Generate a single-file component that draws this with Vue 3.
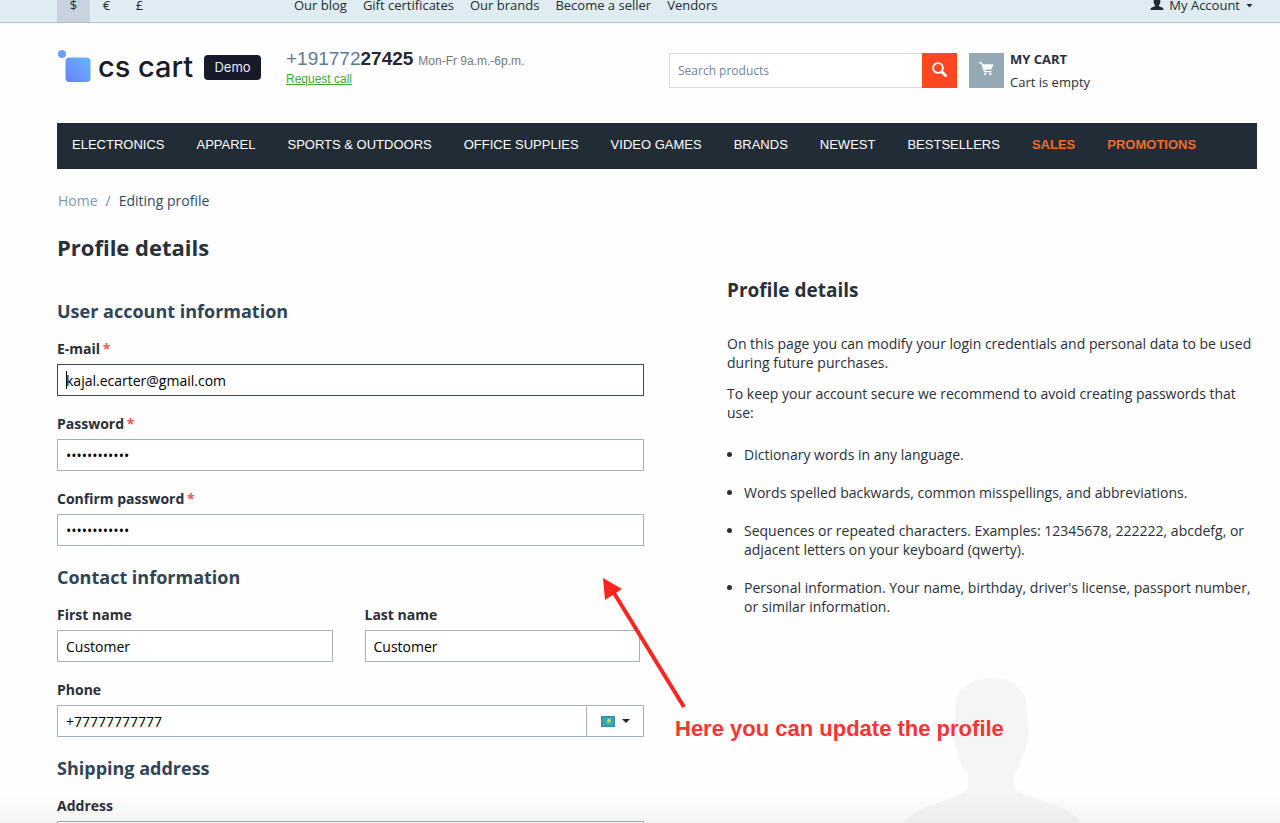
<script setup>
import { ref } from 'vue'

const currencies = [
  { sign: '$', active: true },
  { sign: '€', active: false },
  { sign: '£', active: false },
]
const quickLinks = ['Our blog', 'Gift certificates', 'Our brands', 'Become a seller', 'Vendors']
const menu = [
  { name: 'ELECTRONICS' },
  { name: 'APPAREL' },
  { name: 'SPORTS & OUTDOORS' },
  { name: 'OFFICE SUPPLIES' },
  { name: 'VIDEO GAMES' },
  { name: 'BRANDS' },
  { name: 'NEWEST' },
  { name: 'BESTSELLERS' },
  { name: 'SALES', hot: true },
  { name: 'PROMOTIONS', hot: true },
]
const tips = [
  'Dictionary words in any language.',
  'Words spelled backwards, common misspellings, and abbreviations.',
  'Sequences or repeated characters. Examples: 12345678, 222222, abcdefg, or adjacent letters on your keyboard (qwerty).',
  "Personal information. Your name, birthday, driver's license, passport number, or similar information.",
]
const search = ref('')
const email = ref('kajal.ecarter@gmail.com')
const password = ref('secret123456')
const confirmation = ref('secret123456')
const firstName = ref('Customer')
const lastName = ref('Customer')
const phone = ref('+77777777777')
const address = ref('')
</script>

<template>
  <div class="page">
    <div class="topbar">
      <div class="currencies">
        <button v-for="c in currencies" :key="c.sign" type="button" class="currency" :class="{ active: c.active }">{{ c.sign }}</button>
      </div>
      <nav class="quick-links">
        <a v-for="l in quickLinks" :key="l" href="#">{{ l }}</a>
      </nav>
      <button type="button" class="account">
        <svg class="user-icon" viewBox="0 0 14 14" aria-hidden="true">
          <path d="M7 0C4.600 0 3.500 1.600 3.600 3.600C3.700 5.300 4.300 6.800 5.300 7.500C5.200 8.300 4.500 8.500 3 9C1 9.700 .5 10.400 .5 12H13.500C13.500 10.400 13 9.700 11 9C9.500 8.500 8.800 8.300 8.700 7.500C9.700 6.800 10.300 5.300 10.400 3.600C10.500 1.600 9.400 0 7 0Z" fill="#222c33" />
        </svg>
        <span>My Account</span>
        <svg class="caret" viewBox="0 0 7 4" aria-hidden="true"><path d="M.5 0H6.500L3.500 3.500Z" fill="#222c33" /></svg>
      </button>
    </div>

    <div class="container">
      <header class="header">
        <a href="#" class="logo" aria-label="CS-Cart Demo">
          <svg class="logo-mark" viewBox="0 0 33 33" aria-hidden="true">
            <defs>
              <linearGradient id="markFill" x1="0" y1="1" x2="1" y2="0">
                <stop offset="0" stop-color="#6c80fb" />
                <stop offset="1" stop-color="#65b7ff" />
              </linearGradient>
            </defs>
            <circle cx="4" cy="4" r="4" fill="#6d9df6" />
            <rect x="7.500" y="7.500" width="25" height="24.500" rx="4" fill="url(#markFill)" />
          </svg>
          <span class="logo-name">cs cart</span>
          <span class="badge">Demo</span>
        </a>
        <div class="phone-block">
          <div class="phone-line">
            <a href="#" class="phone-number">+191772<b>27425</b></a>
            <span class="hours">Mon-Fr 9a.m.-6p.m.</span>
          </div>
          <a href="#" class="request">Request call</a>
        </div>
        <form class="search" @submit.prevent>
          <input v-model="search" type="text" placeholder="Search products" aria-label="Search products" />
          <button type="submit" aria-label="Search">
            <svg viewBox="0 0 16 16" aria-hidden="true">
              <circle cx="6" cy="6" r="4.900" fill="none" stroke="#fff" stroke-width="1.900" />
              <path d="M9.800 9.800L13.500 13.500" stroke="#fff" stroke-width="3" stroke-linecap="round" />
            </svg>
          </button>
        </form>
        <a href="#" class="cart">
          <span class="cart-icon">
            <svg viewBox="0 0 15 14" aria-hidden="true">
              <path d="M0 .8H2.600L5.500 9.700H12.600" fill="none" stroke="#fff" stroke-width="1.300" />
              <path d="M3.600 2.300H14.500L12.500 7.200L5.300 8Z" fill="#fff" />
              <circle cx="6.200" cy="11.900" r="1.200" fill="#fff" />
              <circle cx="11.300" cy="11.900" r="1.200" fill="#fff" />
            </svg>
          </span>
          <span class="cart-text"><b>MY CART</b><span>Cart is empty</span></span>
        </a>
      </header>

      <nav class="menu">
        <a v-for="m in menu" :key="m.name" href="#" :class="{ hot: m.hot }">{{ m.name }}</a>
      </nav>

      <div class="crumbs"><a href="#">Home</a><i>/</i><span>Editing profile</span></div>

      <div class="columns">
        <main>
          <h1>Profile details</h1>
          <form class="profile" @submit.prevent>
            <section>
              <h2>User account information</h2>
              <div class="field">
                <label for="email">E-mail <em>*</em></label>
                <div class="with-cursor">
                  <input id="email" v-model="email" class="current" type="text" />
                  <span class="cursor"></span>
                </div>
              </div>
              <div class="field">
                <label for="password">Password <em>*</em></label>
                <input id="password" v-model="password" type="password" />
              </div>
              <div class="field">
                <label for="confirmation">Confirm password <em>*</em></label>
                <input id="confirmation" v-model="confirmation" type="password" />
              </div>
            </section>
            <section>
              <h2>Contact information</h2>
              <div class="names">
                <div class="field">
                  <label for="first">First name</label>
                  <input id="first" v-model="firstName" type="text" />
                </div>
                <div class="field">
                  <label for="last">Last name</label>
                  <input id="last" v-model="lastName" type="text" />
                </div>
              </div>
              <div class="field">
                <label for="phone">Phone</label>
                <div class="phone-input">
                  <input id="phone" v-model="phone" type="tel" />
                  <button type="button" aria-haspopup="listbox" aria-label="Country code: Kazakhstan">
                    <svg class="flag" viewBox="0 0 14 11" aria-hidden="true">
                      <rect width="14" height="11" fill="#3b8794" />
                      <rect x="1" y="1" width="12" height="9" fill="#25a9c6" />
                      <rect x="1" y="1" width="2" height="9" fill="#4d9f9c" />
                      <circle cx="8" cy="4.500" r="2" fill="#d9d64f" />
                      <path d="M5 6Q8 9 11 6L8 7Z" fill="#b8c95b" />
                    </svg>
                    <svg class="caret-large" viewBox="0 0 8 4" aria-hidden="true"><path d="M0 0H8L4 4Z" fill="#222" /></svg>
                  </button>
                </div>
              </div>
            </section>
            <section>
              <h2>Shipping address</h2>
              <div class="field">
                <label for="address">Address</label>
                <input id="address" v-model="address" type="text" />
              </div>
            </section>
          </form>
        </main>

        <aside>
          <h3>Profile details</h3>
          <p>On this page you can modify your login credentials and personal data to be used during future purchases.</p>
          <p>To keep your account secure we recommend to avoid creating passwords that use:</p>
          <ul>
            <li v-for="t in tips" :key="t">{{ t }}</li>
          </ul>
          <svg class="avatar" viewBox="0 0 180 160" aria-hidden="true">
            <path d="M90 0C72 0 53 9 53 30V46C50 52 51 62 54 72C57 81 60 91 66 95V110C60 116 50 120 38 124C20 130 7 137 0 146V160H180V146C173 137 165 131 148 125C132 120 120 116 112 110V95C117 92 118 86 119 82C121 77 124 71 125 64C128 56 127 50 125 46V30C125 9 108 0 90 0Z" fill="#f5f5f5" />
          </svg>
        </aside>
      </div>
    </div>

    <svg class="arrow" viewBox="0 0 86 134" aria-hidden="true">
      <path d="M12 17L82 131" stroke="#f9261f" stroke-width="4" />
      <path d="M1 2L20 13L3 24Z" fill="#f9261f" />
    </svg>
    <div class="note">Here you can update the profile</div>
    <div class="shade"></div>
  </div>
</template>

<style>
body { margin: 0; background: #fefefe; }
</style>

<style scoped>
* { box-sizing: border-box; }
.page {
  position: relative;
  height: 100vh;
  overflow: hidden;
  font-family: "Open Sans", "Noto Sans", sans-serif;
  font-size: 14px;
  line-height: 19px;
  color: #2a2f38;
}
a { color: inherit; text-decoration: none; }
button, input { font: inherit; color: inherit; margin: 0; border-radius: 0; }
button { border: 0; padding: 0; background: none; cursor: pointer; }
svg { display: block; flex: none; }

.topbar {
  display: flex;
  height: 23px;
  padding: 0 27px 0 57px;
  border-bottom: 1px solid #a9c2cd;
  background: #e0ecf3;
  font-size: 13px;
  line-height: 11px;
  color: #222c33;
}
.currencies { display: flex; width: 237px; }
.currency { width: 33px; padding-bottom: 11px; line-height: 11px; }
.currency.active { background: #c9d3df; }
.quick-links { display: flex; gap: 16px; flex: 1; }
.account { display: flex; gap: 5px; height: 11px; line-height: 11px; }
.user-icon { width: 14px; height: 14px; margin-top: -2px; }
.caret { width: 7px; height: 4px; margin: 4px 0 0 1px; }

.container { padding: 0 23px 0 57px; }
.header { display: flex; height: 100px; padding-top: 24px; }
.logo { display: flex; width: 229px; height: 40px; align-items: center; }
.logo-mark { width: 33px; height: 33px; margin: 0 7px 1px 1px; }
.logo-name {
  font-family: Inter, sans-serif;
  font-size: 29px;
  font-weight: 500;
  line-height: 38px;
  color: #1a1b29;
  white-space: nowrap;
}
.badge {
  width: 57px;
  height: 25px;
  margin-left: auto;
  margin-right: 25px;
  border-radius: 4px;
  background: #171a2b;
  color: #eceef5;
  font-family: Inter, sans-serif;
  font-size: 13px;
  line-height: 25px;
  text-align: center;
}
.phone-block { width: 383px; font-family: "Liberation Sans", Arial, sans-serif; font-size: 12px; }
.phone-line { display: flex; gap: 5px; align-items: baseline; line-height: 24px; }
.phone-number { font-size: 19px; color: #5f7a95; }
.phone-number b { color: #25282e; }
.hours { color: #777; }
.request { display: block; line-height: 12px; color: #41ab36; text-decoration: underline; }
.search { display: flex; flex: none; width: 288px; height: 35px; margin-top: 6px; }
.search input {
  flex: 1;
  min-width: 0;
  padding: 0 8px;
  border: 1px solid #d8dcdf;
  border-right: 0;
  background: #fff;
  font-size: 12px;
  outline: 0;
}
.search input::placeholder { color: #71859c; opacity: 1; }
.search button { display: grid; place-items: center; width: 35px; background: #ff4622; }
.search svg { width: 16px; height: 16px; margin-bottom: 2px; }
.cart { display: flex; gap: 6px; margin: 6px 0 0 12px; }
.cart-icon { display: grid; place-items: center; width: 35px; height: 35px; background: #94a8b5; }
.cart-icon svg { width: 15px; height: 14px; margin-bottom: 3px; }
.cart-text { display: flex; flex-direction: column; margin-top: -5px; font-size: 13px; line-height: 23px; }

.menu {
  display: flex;
  height: 46px;
  padding: 0 0 3px;
  background: #222c36;
  color: #fff;
  font-family: "Liberation Sans", Arial, sans-serif;
  font-size: 13px;
  line-height: 43px;
  white-space: nowrap;
}
.menu a { padding: 0 17px 0 15px; }
.menu .hot { color: #ef6b2a; font-weight: 700; }

.crumbs { display: flex; gap: 8px; margin: 22px 0 0 1px; line-height: 20px; color: #34495e; }
.crumbs a { color: #8296ae; }
.crumbs i { color: #71859c; font-style: normal; }

.columns { display: grid; grid-template-columns: 587fr 530fr; gap: 83px; }
h1, h2, h3 { margin: 0; font-weight: 700; }
h1 { margin: 21px 0 37px; font-size: 22px; line-height: 30px; }
h2 { margin-bottom: 16px; font-size: 18px; line-height: 24px; color: #2f4457; }
h3 { margin: 66px 0 31px; font-size: 19px; line-height: 26px; }
.profile { display: flex; flex-direction: column; gap: 19px; }
.field + .field, .names + .field { margin-top: 18px; }
.field label { display: block; margin-bottom: 5px; font-weight: 700; line-height: 20px; }
.field em { margin-left: -1px; color: #e9594b; font-style: normal; }
.field input {
  display: block;
  width: 100%;
  height: 32px;
  padding: 0 8px;
  border: 1px solid #a2b3c2;
  background: #fff;
  color: #000;
  outline: 0;
}
.field .current { border-color: #35495c; }
.with-cursor { position: relative; }
.cursor { position: absolute; left: 9px; top: 7px; width: 1px; height: 18px; background: #000; }
.names { display: grid; grid-template-columns: 1fr 1fr; gap: 32px; padding-right: 4px; }
.names .field { margin: 0; }
.phone-input { display: flex; }
.phone-input input { flex: 1; min-width: 0; }
.phone-input button {
  display: flex;
  gap: 7px;
  align-items: center;
  justify-content: center;
  width: 57px;
  border: 1px solid #a2b3c2;
  border-left: 0;
  background: #fff;
}
.flag { width: 14px; height: 11px; }
.caret-large { width: 8px; height: 4px; }

aside p { margin: 0 0 12px; }
ul { margin: 23px 0 0; padding: 0 0 0 17px; }
li { margin-bottom: 19px; }
.avatar { width: 180px; height: 160px; margin: 62px auto 0; }

.arrow { position: absolute; left: 602px; top: 576px; width: 86px; height: 134px; }
.note {
  position: absolute;
  left: 675px;
  top: 716px;
  font-family: "Liberation Sans", Arial, sans-serif;
  font-size: 22px;
  font-weight: 700;
  line-height: 26px;
  color: #f83535;
  white-space: nowrap;
}
.shade {
  position: absolute;
  inset: auto 0 0;
  height: 30px;
  background: linear-gradient(transparent, rgba(0, 0, 0, 0.04));
  pointer-events: none;
}
</style>
